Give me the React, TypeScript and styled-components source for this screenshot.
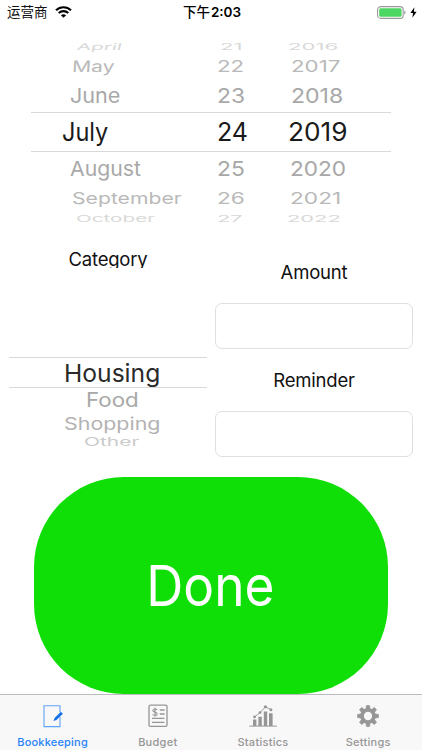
import React from 'react';
import styled, { createGlobalStyle } from 'styled-components';

const GlobalStyle = createGlobalStyle`
  * { box-sizing: border-box; }
  body {
    margin: 0;
    background: #fff;
    font-family: Inter, "Noto Sans CJK SC", sans-serif;
  }
`;

const Screen = styled.main`
  width: 422px;
  height: 750px;
  display: flex;
  flex-direction: column;
  background: #fff;
  color: #111;
  overflow: hidden;
`;

const StatusBar = styled.header`
  height: 40px;
  padding: 0 5px 16px 7px;
  display: grid;
  grid-template-columns: 1fr auto 1fr;
  align-items: center;
  font-size: 13.5px;
  line-height: 24px;
`;

const StatusGroup = styled.div<{ $end?: boolean }>`
  display: flex;
  align-items: center;
  gap: ${(p) => (p.$end ? 4 : 7)}px;
  justify-content: ${(p) => (p.$end ? 'flex-end' : 'flex-start')};
  svg { display: block; }
`;

const Time = styled.div`
  display: flex;
  gap: 1px;
  font-weight: 500;
  color: #000;
  b { font-weight: 600; }
`;

const DatePicker = styled.section`
  width: 360px;
  height: 184px;
  margin-left: 31px;
  display: flex;
  flex-direction: column;
`;

interface Depth { height: number; size: number; sy: number; color: string }

const WheelRow = styled.div<{ $depth: Depth; $columns: string }>`
  flex: none;
  height: ${(p) => p.$depth.height}px;
  display: grid;
  grid-template-columns: ${(p) => p.$columns};
  align-items: center;
  font-size: ${(p) => p.$depth.size}px;
  line-height: 12px;
  color: ${(p) => p.$depth.color};
`;

const SelectedRow = styled(WheelRow)`
  border-top: 1px solid #d9d9d9;
  border-bottom: 1px solid #d9d9d9;
`;

const WheelText = styled.span<{ $inset: number; $sx: number; $sy: number; $skew?: number }>`
  justify-self: start;
  white-space: nowrap;
  margin-left: ${(p) => p.$inset}px;
  transform-origin: left center;
  transform: scale(${(p) => p.$sx}, ${(p) => p.$sy}) skewX(${(p) => p.$skew ?? 0}deg);
`;

const Form = styled.section`
  height: 252px;
  padding: 0 9px;
  display: grid;
  grid-template-columns: 198px 198px;
  column-gap: 8px;
`;

const CategoryColumn = styled.div`
  display: flex;
  flex-direction: column;
`;

const CategoryTitle = styled.h2`
  margin: 19px 0 89px;
  height: 25px;
  font-size: 18.5px;
  font-weight: 400;
  line-height: 32px;
  letter-spacing: -0.2px;
  text-align: center;
  overflow: hidden;
  color: #111;
`;

const ClippedCell = styled.div`
  height: 29px;
  display: flex;
  align-items: center;
  overflow: hidden;
`;

const FieldColumn = styled.div`
  display: flex;
  flex-direction: column;
`;

const Field = styled.label`
  height: 108px;
  display: flex;
  flex-direction: column;
  font-size: 18.5px;
  line-height: 20px;
  letter-spacing: -0.2px;
  text-align: center;
  padding-top: 38px;
`;

const FieldInput = styled.input`
  width: 198px;
  height: 46px;
  margin-top: 21px;
  padding: 0 12px;
  flex: none;
  border: 1px solid #dfdfdf;
  border-radius: 7px;
  background: #fff;
  font: inherit;
  outline: none;
`;

const DoneButton = styled.button`
  width: 354px;
  height: 217.4px;
  margin: 0.6px 0 0 34px;
  padding: 2px 0 0;
  flex: none;
  border: 0;
  border-radius: 90px;
  background: #0fdf07;
  color: #fff;
  font: 400 56px/60px Inter, sans-serif;
  span {
    display: inline-block;
    transform: translateX(-0.5px) scaleX(0.917);
  }
`;

const TabBar = styled.nav`
  height: 56px;
  flex: none;
  display: grid;
  grid-template-columns: repeat(4, 105.2px);
  border-top: 1px solid #bdbdbf;
  background: #f8f8f8;
`;

const Tab = styled.a<{ $active?: boolean }>`
  display: flex;
  flex-direction: column;
  align-items: center;
  padding-top: 9px;
  gap: 7px;
  font-size: 11px;
  font-weight: 500;
  line-height: 14px;
  letter-spacing: ${(p) => (p.$active ? 0.2 : 0.27)}px;
  color: ${(p) => (p.$active ? '#2a83f6' : '#969696')};
  svg { display: block; }
`;

const far: Depth = { height: 13, size: 24, sy: 0.39, color: '#d8d8d8' };
const mid: Depth = { height: 26, size: 24, sy: 0.66, color: '#b9b9b9' };
const midUpper: Depth = { ...mid, height: 27 };
const near: Depth = { height: 33, size: 24, sy: 0.85, color: '#a8a8a8' };
const nearUpper: Depth = { ...near, height: 32 };
const nearLower: Depth = { ...near, height: 34 };
const chosen: Depth = { height: 40, size: 25, sy: 1.02, color: '#1a1a1a' };

type Cell = [text: string, inset: number, sx: number];

const DATE_COLUMNS = '160px 90px 110px';

const dates: { depth: Depth; skew?: number; cells: [Cell, Cell, Cell] }[] = [
  { depth: far, skew: -6, cells: [['April', 45.5, 0.86], ['21', 29, 0.92], ['2016', 6.7, 0.925]] },
  { depth: midUpper, skew: -3, cells: [['May', 41, 0.88], ['22', 26.3, 0.93], ['2017', 9.7, 0.93]] },
  { depth: nearUpper, cells: [['June', 38.6, 0.9], ['23', 25.5, 0.95], ['2018', 10, 0.96]] },
  { depth: chosen, cells: [['July', 30.6, 0.94], ['24', 26, 1], ['2019', 7.4, 1.05]] },
  { depth: nearLower, cells: [['August', 39.3, 0.885], ['25', 25.5, 0.95], ['2020', 9, 0.94]] },
  { depth: mid, cells: [['September', 41, 0.882], ['26', 25.5, 0.94], ['2021', 9, 0.945]] },
  { depth: far, cells: [['October', 45.3, 0.86], ['27', 26.3, 0.91], ['2022', 5.7, 0.91]] },
];

const categories: { depth: Depth; cell: Cell }[] = [
  { depth: { height: 24, size: 24, sy: 0.82, color: '#a8a8a8' }, cell: ['Food', 76.5, 0.93] },
  { depth: { height: 24, size: 24, sy: 0.71, color: '#b2b2b2' }, cell: ['Shopping', 54.7, 0.892] },
  { depth: { height: 12, size: 24, sy: 0.5, color: '#cbcbcb' }, cell: ['Other', 75.3, 0.872] },
];

const WifiIcon = () => (
  <svg width="17" height="12" viewBox="0 0 17 12" fill="none" stroke="#000" strokeWidth="2.1">
    <path d="M1 4.3C5.2 0.2 11.8 0.2 16 4.3" />
    <path d="M3.7 7.1C6.4 4.5 10.6 4.5 13.3 7.1" />
    <path d="M8.5 11.8L5.9 9.2C7.4 7.9 9.6 7.9 11.1 9.2Z" fill="#000" stroke="none" />
  </svg>
);

const BatteryIcon = () => (
  <svg width="29" height="13" viewBox="0 0 29 13">
    <rect x="0.6" y="0.6" width="25.6" height="11.8" rx="3.2" fill="#fff" stroke="#9a9a9a" strokeWidth="1.1" />
    <rect x="2.2" y="2.2" width="22.4" height="8.6" rx="1.5" fill="#4cd763" />
    <path d="M27.3 4.5Q28.6 5 28.6 6.5T27.3 8.5Z" fill="#9a9a9a" />
  </svg>
);

const BoltIcon = () => (
  <svg width="7" height="11" viewBox="0 0 7 11">
    <path d="M4.4 0.3L0.4 6.1H3L2.4 10.7L6.6 4.7H3.9Z" fill="#000" />
  </svg>
);

const BookkeepingIcon = () => (
  <svg width="20" height="24" viewBox="0.5 0 20 24">
    <path d="M17.5 8V1.8H1.5V22.6H17.5V13" fill="none" stroke="#5ea4f4" strokeWidth="1.1" />
    <path d="M10.9 17L12.1 14L18.3 7.8L20.4 9.8L14 16Z" fill="#1671e6" />
  </svg>
);

const BudgetIcon = () => (
  <svg width="20" height="24" viewBox="0 0 20 24" fill="none" stroke="#969696" strokeWidth="1.3">
    <rect x="1" y="1.2" width="18" height="21.2" rx="1.4" />
    <path d="M11.8 6H16.6M11.8 10H16.6M4 14.4H16.4M4 18.4H16.4" />
    <path d="M9.1 5.9C8.3 4.6 4.8 4.7 4.8 6.6C4.8 8.5 9.2 7.8 9.2 9.9C9.2 11.8 5.6 11.8 4.6 10.2M7 3.6V12.7" strokeWidth="1.1" />
  </svg>
);

const StatisticsIcon = () => (
  <svg width="28" height="24" viewBox="0 0 28 24" fill="#969696">
    <path d="M0.2 21.6H27.8V22.6H0.2Z" />
    <path d="M4 15.5H7.4V22H4ZM9.4 12.7H12.8V22H9.4ZM14.8 7.5H18.2V22H14.8ZM20 9.3H23.6V22H20Z" />
    <path d="M5.6 12.9L11 8.6L16.4 2.8L21.9 5.5" fill="none" stroke="#969696" strokeWidth="0.9" />
    <circle cx="5.6" cy="12.9" r="1.4" />
    <circle cx="11" cy="8.6" r="1.4" />
    <circle cx="16.4" cy="2.8" r="1.6" />
    <circle cx="21.9" cy="5.7" r="1.5" />
  </svg>
);

const GEAR_ANGLES = [0, 45, 90, 135, 180, 225, 270, 315];

const SettingsIcon = () => (
  <svg width="22" height="24" viewBox="0 0 22 24">
    {GEAR_ANGLES.map((angle) => (
      <path key={angle} d="M9 5L9.5 1.6H12.5L13 5Z" fill="#969696" stroke="#969696" strokeWidth="0.8" strokeLinejoin="round" transform={`rotate(${angle} 11 12)`} />
    ))}
    <circle cx="11" cy="12" r="6" fill="none" stroke="#969696" strokeWidth="3.7" />
  </svg>
);

const tabs = [
  { label: 'Bookkeeping', Icon: BookkeepingIcon, active: true },
  { label: 'Budget', Icon: BudgetIcon },
  { label: 'Statistics', Icon: StatisticsIcon },
  { label: 'Settings', Icon: SettingsIcon },
];

export default function App() {
  return (
    <>
      <GlobalStyle />
      <Screen>
        <StatusBar>
          <StatusGroup>
            <span>运营商</span>
            <WifiIcon />
          </StatusGroup>
          <Time>
            <span>下午</span>
            <b>2:03</b>
          </Time>
          <StatusGroup $end>
            <BatteryIcon />
            <BoltIcon />
          </StatusGroup>
        </StatusBar>

        <DatePicker>
          {dates.map(({ depth, skew, cells }) => {
            const Row = depth === chosen ? SelectedRow : WheelRow;
            return (
              <Row key={cells[0][0]} $depth={depth} $columns={DATE_COLUMNS}>
                {cells.map(([text, inset, sx], column) => (
                  <WheelText key={text} $inset={inset} $sx={sx} $sy={depth.sy} $skew={column === 0 ? skew : 0}>
                    {text}
                  </WheelText>
                ))}
              </Row>
            );
          })}
        </DatePicker>

        <Form>
          <CategoryColumn>
            <CategoryTitle>Category</CategoryTitle>
            <SelectedRow $depth={{ height: 31, size: 25, sy: 0.98, color: '#2a2a2a' }} $columns="198px">
              <ClippedCell>
                <WheelText $inset={54.5} $sx={0.985} $sy={0.98}>Housing</WheelText>
              </ClippedCell>
            </SelectedRow>
            {categories.map(({ depth, cell: [text, inset, sx] }) => (
              <WheelRow key={text} $depth={depth} $columns="198px">
                <WheelText $inset={inset} $sx={sx} $sy={depth.sy}>{text}</WheelText>
              </WheelRow>
            ))}
          </CategoryColumn>
          <FieldColumn>
            <Field>
              Amount
              <FieldInput type="text" />
            </Field>
            <Field>
              Reminder
              <FieldInput type="text" />
            </Field>
          </FieldColumn>
        </Form>

        <DoneButton type="button">
          <span>Done</span>
        </DoneButton>

        <TabBar>
          {tabs.map(({ label, Icon, active }) => (
            <Tab key={label} $active={active}>
              <Icon />
              <span>{label}</span>
            </Tab>
          ))}
        </TabBar>
      </Screen>
    </>
  );
}
